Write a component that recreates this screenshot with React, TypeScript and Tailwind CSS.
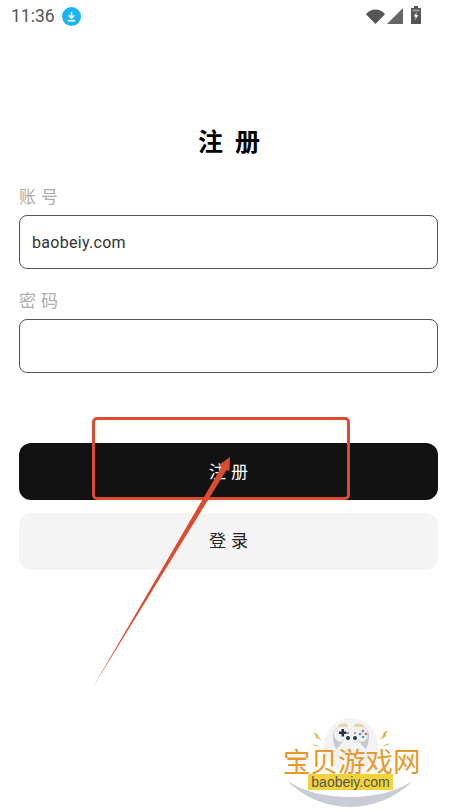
import React from 'react';

const cjk = "font-['Noto_Sans_CJK_SC','Noto_Sans',sans-serif]";

function StatusBar() {
  return (
    <div className="flex h-[32px] items-center pl-[11px] pr-[36px] pt-[1px]">
      <span className="font-['Roboto',sans-serif] text-[17.500px] leading-none text-[#555555]">11:36</span>
      <span className="ml-[7px] flex h-[19px] w-[19px] items-center justify-center rounded-full bg-[#1cb4f5]">
        <svg width="11" height="11" viewBox="0 0 11 11" fill="none" stroke="white" strokeWidth="1.6">
          <path d="M5.5 1v5.5M2.8 4.4l2.7 2.8 2.700-2.800" />
          <path d="M1.8 9.7h7.4" />
        </svg>
      </span>
      <div className="ml-auto flex items-center">
        <svg width="19" height="15" viewBox="0 0 19 15" fill="#555555">
          <path d="M0 5.200C2.600 2 5.800 0.500 9.500 0.500s6.900 1.500 9.500 4.700L9.500 15z" />
        </svg>
        <svg className="ml-[2px] -mt-[1px]" width="16" height="16" viewBox="0 0 16 16" fill="#666666">
          <path d="M16 0v16H0z" />
        </svg>
        <svg className="ml-[8px] -mt-[3px]" width="10" height="18" viewBox="0 0 10 18">
          <path d="M3 0h4v2h3v16H0V2h3z" fill="#555555" />
          <path d="M1.500 3.500h7v2h-7z" fill="#9a9a9a" />
          <path d="M5.800 6 2.800 10.600h1.900l-.5 3.400 3-5h-2z" fill="white" />
        </svg>
      </div>
    </div>
  );
}

function Field({ label, value }: { label: string; value?: string }) {
  return (
    <div>
      <div className={`${cjk} text-[17px] leading-[24px] tracking-[5px] text-[#adadad]`}>{label}</div>
      <div className="mt-[7px] flex h-[54px] items-center rounded-[8px] border border-[#555555] px-[12px] pt-[1px] font-['Roboto',sans-serif] text-[16px] tracking-[0.3px] text-[#333333]">
        {value}
      </div>
    </div>
  );
}

function Watermark() {
  return (
    <div className="absolute left-[270px] top-[700px] h-[112px] w-[170px]">
      <svg className="absolute left-0 top-0" width="170" height="112" viewBox="0 0 170 112">
        <circle cx="81" cy="45" r="27" fill="#f3f3f5" />
        <path d="M17 81c18 17 40 26 63 26s45-9 63-26c-18 11-39 16-63 16s-45-5-63-16z" fill="#c9cbd6" />
        {/* shoulder buttons */}
        <path d="M68 26c2-3 8-3 10-1v2H68zM84 25c2-2 8-2 10 1v1H84z" fill="#e6d7a6" />
        {/* controller body */}
        <path d="M63 36c0-6 3-9 8-9h20c5 0 8 3 8 9 0 5-1 9-3 13-2-1-6-6-8-10H74c-2 4-6 9-8 10-2-4-3-8-3-13z" fill="#c6c9ce" />
        <path d="M64 34c0-4 3-7 7-7h20c4 0 7 3 7 7 0 4-3 8-7 8l-3-3H74l-3 3c-4 0-7-4-7-8z" fill="#f1f2f4" />
        <path d="M69 31.500h2.500V29h2.500v2.500h2.500V34h-2.500v2.500h-2.500V34H69z" fill="#1f3348" />
        <circle cx="78" cy="33" r="1" fill="#d85a6a" />
        <circle cx="85" cy="33" r="1" fill="#d85a6a" />
        <circle cx="78" cy="38" r="2" fill="#1f3348" />
        <circle cx="85" cy="38" r="2" fill="#1f3348" />
        <circle cx="93" cy="31" r="1.300" fill="#d85a6a" />
        <circle cx="96" cy="34" r="1.300" fill="#d85a6a" />
        <circle cx="90" cy="34" r="1.300" fill="#3a9fd0" />
        <circle cx="93" cy="37" r="1.300" fill="#3a9fd0" />
        {/* sparks */}
        <path d="M43 32l5 3-.5 1.500 4.500 4-6.500-3 .5-1.500zM118 30l-5 3.500.5 1.500-3.500 5 6-4-.5-1.500z" fill="#e3a93a" />
        <path d="M42 44l8 2.500-5-.5zM120 43l-8 3 5-.5z" fill="#e3a93a" />
      </svg>
      <div className={`${cjk} absolute left-[13px] top-[46px] whitespace-nowrap text-[27.500px] leading-[28px] text-[#e79a2b]`}>
        宝贝游戏网
      </div>
      <div className="absolute left-[38px] top-[74px] flex h-[16px] w-[85px] items-center justify-center bg-[#f4d23c] font-['Liberation_Sans',sans-serif] text-[14px] leading-none text-[#555555]">
        baobeiy.com
      </div>
    </div>
  );
}

export default function App() {
  return (
    <div className="relative h-[812px] w-[457px] overflow-hidden bg-white">
      <StatusBar />
      <h1 className={`${cjk} mt-[92px] pl-[13px] text-center text-[25px] font-bold leading-[32px] tracking-[12px] text-black`}>注册</h1>
      <div className="mt-[28px] px-[19px]">
        <div className="flex flex-col gap-[19px]">
          <Field label="账号" value="baobeiy.com" />
          <Field label="密码" />
        </div>
        <div className="mt-[70px] flex flex-col gap-[13px]">
          <button className={`${cjk} h-[57px] rounded-[12px] bg-[#121212] pb-[2px] pl-[5px] text-[17px] tracking-[5px] text-white`}>注册</button>
          <button className={`${cjk} h-[57px] rounded-[12px] bg-[#f4f4f4] pb-[3px] pl-[5px] text-[17px] tracking-[5px] text-[#222222]`}>登录</button>
        </div>
      </div>

      {/* annotation drawn over the screenshot */}
      <div className="absolute left-[92px] top-[417px] h-[83px] w-[258px] rounded-[5px] border-[3px] border-[#dc4a30]" />
      <svg className="absolute left-0 top-0" width="457" height="812" viewBox="0 0 457 812" fill="#dc4a30">
        <path d="M93 687 L221.500 467 L219 465 L230 457 L229.500 471 L226.500 470 Z" />
      </svg>

      <Watermark />
    </div>
  );
}
